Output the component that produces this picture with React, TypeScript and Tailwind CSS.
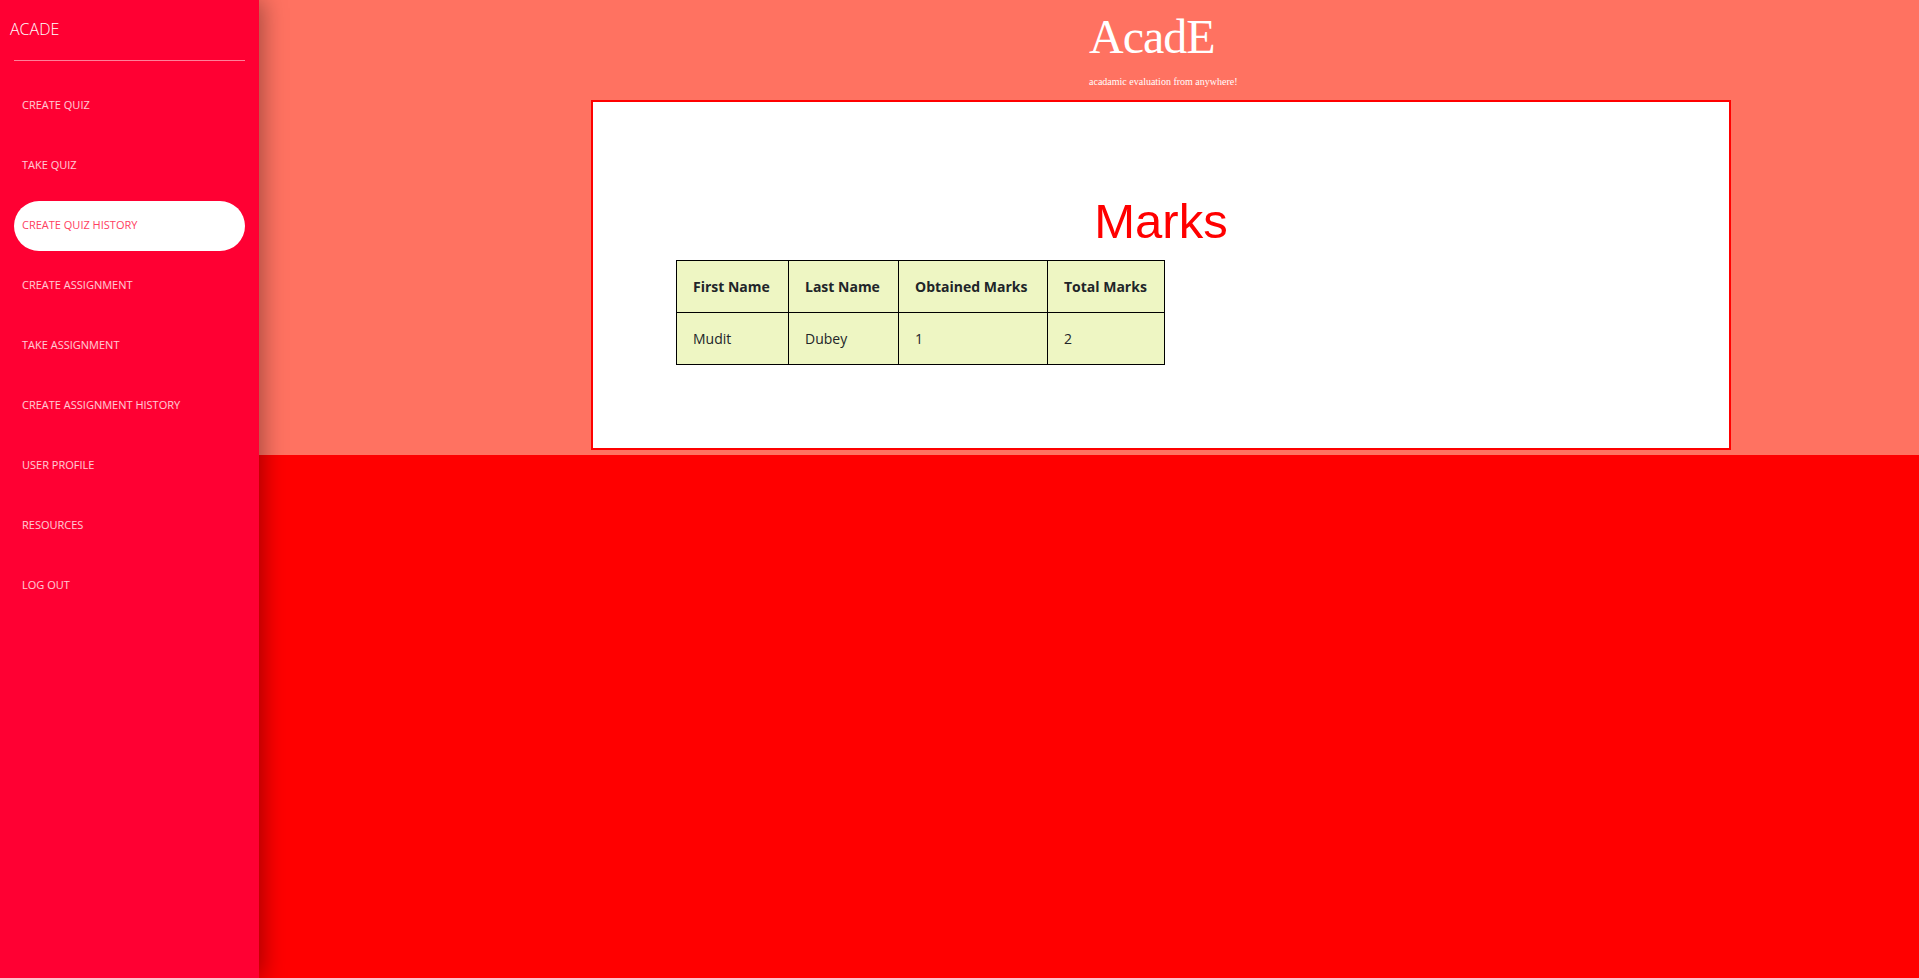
const navItems = [
  'Create Quiz',
  'Take Quiz',
  'Create Quiz History',
  'Create Assignment',
  'Take Assignment',
  'Create Assignment History',
  'User Profile',
  'Resources',
  'Log Out',
];

const rows = [{ first: 'Mudit', last: 'Dubey', obtained: '1', total: '2' }];

function Sidebar() {
  return (
    <aside className="relative z-10 h-[978px] w-[259px] shrink-0 bg-[#ff0033] shadow-[4px_0_22px_rgba(0,0,0,0.35)] font-['Open_Sans',sans-serif]">
      <div className="pl-[10px] pt-[17px] text-[16px] leading-6 font-light text-white">ACADE</div>
      <div className="mx-[14px] mt-[19px] h-px bg-white/50" />
      <ul className="mt-[20px] flex flex-col gap-[10px] px-[14px]">
        {navItems.map((item) => {
          const active = item === 'Create Quiz History';
          return (
            <li
              key={item}
              className={`flex h-[50px] items-center rounded-full pb-px pl-2 text-[11px] uppercase ${
                active ? 'bg-white text-[#ff4060]' : 'text-white/80'
              }`}
            >
              {item}
            </li>
          );
        })}
      </ul>
    </aside>
  );
}

function MarksTable() {
  return (
    <table className="ml-[83px] border-collapse bg-[#eef6c3] text-[14px] text-[#212529] font-['Open_Sans',sans-serif]">
      <thead>
        <tr className="h-[52px]">
          <th className="w-[112px] border border-black pl-4 text-left font-bold">First Name</th>
          <th className="w-[110px] border border-black pl-4 text-left font-bold">Last Name</th>
          <th className="w-[149px] border border-black pl-4 text-left font-bold">Obtained Marks</th>
          <th className="w-[117px] border border-black pl-4 text-left font-bold">Total Marks</th>
        </tr>
      </thead>
      <tbody>
        {rows.map((r) => (
          <tr key={r.first} className="h-[52px]">
            <td className="border border-black pl-4">{r.first}</td>
            <td className="border border-black pl-4">{r.last}</td>
            <td className="border border-black pl-4">{r.obtained}</td>
            <td className="border border-black pl-4">{r.total}</td>
          </tr>
        ))}
      </tbody>
    </table>
  );
}

export default function App() {
  return (
    <div className="flex h-[978px] w-full overflow-hidden bg-[#ff0000]">
      <Sidebar />
      <main className="flex-1">
        <section className="h-[455px] bg-[#ff7261]">
          <div className="pl-[50%] pt-[13px] font-['Liberation_Serif',serif] text-white">
            <h1 className="text-[48px] leading-[48px] tracking-[-1px]">AcadE</h1>
            <p className="mt-[16px] text-[10px] leading-[10px]">acadamic evaluation from anywhere!</p>
          </div>
          <div className="ml-[332px] mt-[13px] h-[350px] w-[1140px] border-2 border-[#ff0000] bg-white">
            <h2 className="mt-[90px] text-center text-[49px] leading-[1.2] text-[#ff0000] font-['Liberation_Sans',sans-serif]">
              Marks
            </h2>
            <div className="mt-[9px]">
              <MarksTable />
            </div>
          </div>
        </section>
      </main>
    </div>
  );
}
